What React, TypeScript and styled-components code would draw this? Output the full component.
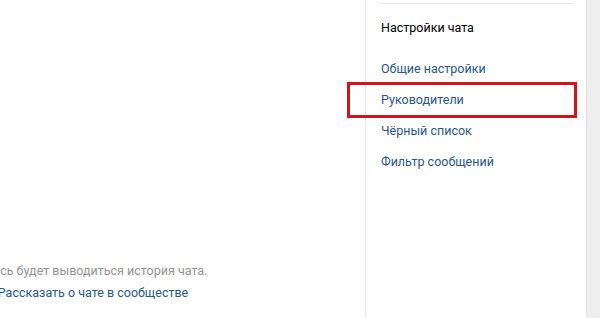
import React from 'react';
import styled, { createGlobalStyle } from 'styled-components';

const GlobalStyle = createGlobalStyle`
  html, body {
    margin: 0;
    padding: 0;
    background: #edeef0;
  }
  body {
    font-family: Roboto, "Open Sans", "Liberation Sans", sans-serif;
    font-size: 12.5px;
    -webkit-font-smoothing: antialiased;
  }
`;

const Page = styled.div`
  display: flex;
  height: 318px;
  width: 600px;
  overflow: hidden;
`;

const ChatArea = styled.div`
  width: 365px;
  flex-shrink: 0;
  background: #fff;
  display: flex;
  flex-direction: column;
  justify-content: flex-end;
  padding-bottom: 14px;
  box-sizing: border-box;
  overflow: hidden;
`;

const EmptyNote = styled.div`
  width: 240px;
  margin-left: -27px;
  text-align: center;
  line-height: 22px;
  white-space: nowrap;
`;

const NoteText = styled.div`
  color: #939393;
`;

const NoteLink = styled.a`
  display: block;
  color: #2a5885;
  text-decoration: none;
`;

const SidePanel = styled.div`
  width: 222px;
  flex-shrink: 0;
  background: #fff;
  border-left: 1px solid #e7e8ec;
  border-right: 1px solid #e3e4e8;
  padding: 3px 12px 0 15px;
  box-sizing: border-box;
`;

const PanelHeader = styled.div`
  border-top: 1px solid #e7e8ec;
  padding-top: 15px;
`;

const PanelTitle = styled.div`
  color: #000;
  line-height: 18px;
`;

const Menu = styled.div`
  display: flex;
  flex-direction: column;
  margin-top: 16px;
`;

const MenuItem = styled.a<{ $marked?: boolean }>`
  position: relative;
  display: block;
  height: 31px;
  line-height: 31px;
  color: #2a5885;
  text-decoration: none;

  ${(p) =>
    p.$marked &&
    `
    &::after {
      content: '';
      position: absolute;
      left: -34px;
      right: -3px;
      top: -2px;
      bottom: -3px;
      border: 3px solid #d4141c;
      pointer-events: none;
    }
  `}
`;

const items = [
  { label: 'Общие настройки' },
  { label: 'Руководители', marked: true },
  { label: 'Чёрный список' },
  { label: 'Фильтр сообщений' },
];

export default function App() {
  return (
    <>
      <GlobalStyle />
      <Page>
        <ChatArea>
          <EmptyNote>
            <NoteText>Здесь будет выводиться история чата.</NoteText>
            <NoteLink href="#">Рассказать о чате в сообществе</NoteLink>
          </EmptyNote>
        </ChatArea>
        <SidePanel>
          <PanelHeader>
            <PanelTitle>Настройки чата</PanelTitle>
          </PanelHeader>
          <Menu>
            {items.map((it) => (
              <MenuItem key={it.label} href="#" $marked={it.marked}>
                {it.label}
              </MenuItem>
            ))}
          </Menu>
        </SidePanel>
      </Page>
    </>
  );
}
